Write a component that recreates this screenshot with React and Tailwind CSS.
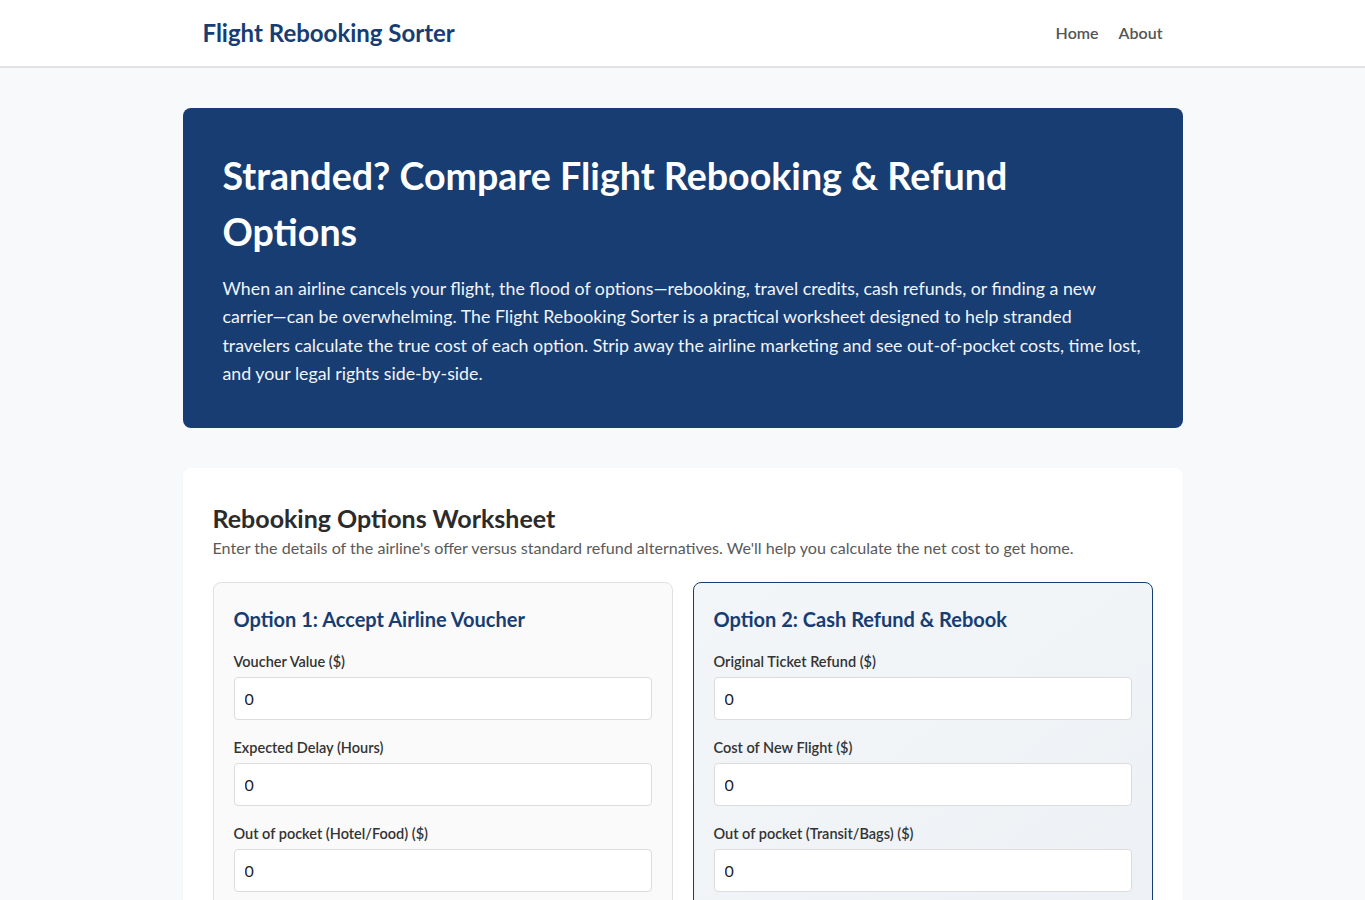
const font = { fontFamily: 'Lato, "Noto Sans", sans-serif' };

function Field({ label }) {
  return (
    <div className="mb-[17px]">
      <label className="block text-[14.5px] leading-[21px] mb-[5px] font-semibold text-[#333]">{label}</label>
      <input
        type="number"
        defaultValue="0"
        className="w-full h-[43px] px-[10px] text-base text-[#222] bg-white border border-[#dcdcdc] rounded-[4px] outline-none"
      />
    </div>
  );
}

export default function App() {
  return (
    <div className="min-h-screen bg-[#f8f9fa] text-[#333]" style={font}>
      {/* Header */}
      <header className="bg-white border-b-2 border-[#e2e2e2]">
        <div className="max-w-[1000px] mx-auto px-5 h-[66px] flex items-center justify-between">
          <a href="#" className="text-2xl font-bold text-[#173d73]">
            Flight Rebooking Sorter
          </a>
          <nav className="flex items-center gap-5">
            <a href="#" className="text-base font-semibold text-[#555]">Home</a>
            <a href="#" className="text-base font-semibold text-[#555]">About</a>
          </nav>
        </div>
      </header>

      <main className="max-w-[1000px] mx-auto pt-10 pb-10">
        {/* Hero */}
        <section className="bg-[#173d73] text-white rounded-lg p-10">
          <h1 className="text-[37.6px] leading-[56px] font-bold mb-[14px]">
            Stranded? Compare Flight Rebooking &amp; Refund Options
          </h1>
          <p className="text-[17.8px] leading-[1.6] text-[#f1f4f8]">
            When an airline cancels your flight, the flood of options—rebooking, travel credits, cash refunds, or finding a new carrier—can be overwhelming. The Flight Rebooking Sorter is a practical worksheet designed to help stranded travelers calculate the true cost of each option. Strip away the airline marketing and see out-of-pocket costs, time lost, and your legal rights side-by-side.
          </p>
        </section>

        {/* Worksheet */}
        <section className="mt-10 bg-white rounded-lg shadow-[0_1px_3px_rgba(0,0,0,0.04)] px-[30px] pt-[35px] pb-[30px]">
          <h2 className="text-[25px] leading-[31px] font-bold text-[#2b2b2b] mb-[2px]">Rebooking Options Worksheet</h2>
          <p className="text-[16.1px] leading-6 text-[#5a5a5a]">
            Enter the details of the airline's offer versus standard refund alternatives. We'll help you calculate the net cost to get home.
          </p>

          <div className="mt-[22px] grid grid-cols-2 gap-5">
            <div className="bg-[#fafafa] border border-[#e0e0e0] rounded-lg px-5 pt-5 pb-2">
              <h3 className="text-[20px] leading-8 font-bold text-[#173d73] mb-4">Option 1: Accept Airline Voucher</h3>
              <Field label="Voucher Value ($)" />
              <Field label="Expected Delay (Hours)" />
              <Field label="Out of pocket (Hotel/Food) ($)" />
            </div>
            <div className="bg-gradient-to-br from-[#f3f6f9] to-[#edf1f5] border border-[#173d73] rounded-lg px-5 pt-5 pb-2">
              <h3 className="text-[20px] leading-8 font-bold text-[#173d73] mb-4">Option 2: Cash Refund &amp; Rebook</h3>
              <Field label="Original Ticket Refund ($)" />
              <Field label="Cost of New Flight ($)" />
              <Field label="Out of pocket (Transit/Bags) ($)" />
            </div>
          </div>
        </section>
      </main>
    </div>
  );
}
